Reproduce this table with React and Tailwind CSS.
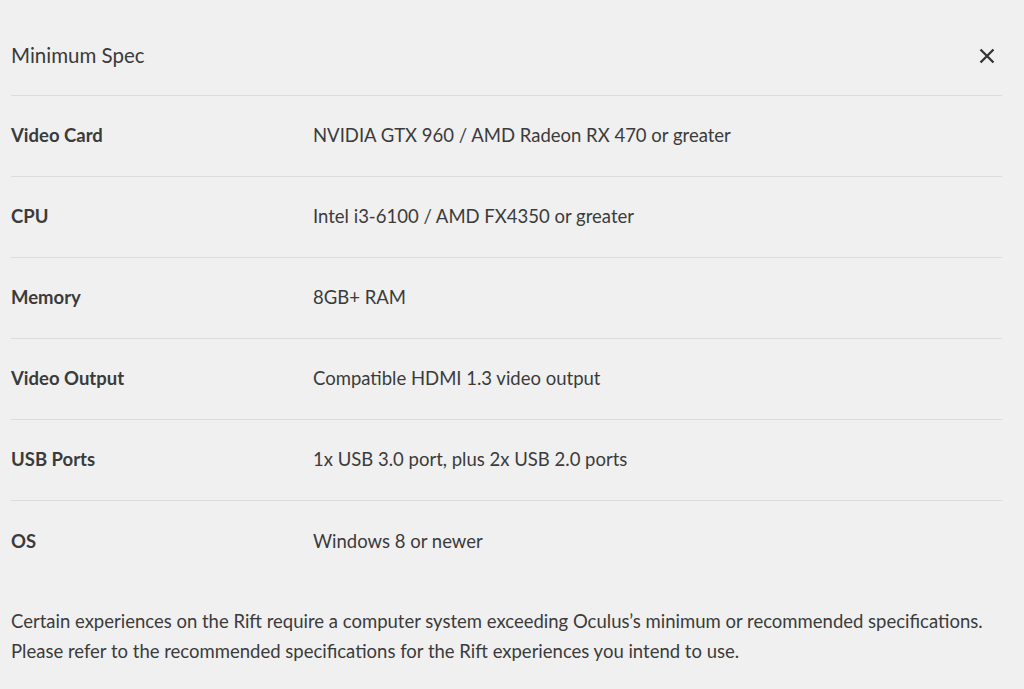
import React from "react";

const specs = [
  ["Video Card", "NVIDIA GTX 960 / AMD Radeon RX 470 or greater"],
  ["CPU", "Intel i3-6100 / AMD FX4350 or greater"],
  ["Memory", "8GB+ RAM"],
  ["Video Output", "Compatible HDMI 1.3 video output"],
  ["USB Ports", "1x USB 3.0 port, plus 2x USB 2.0 ports"],
  ["OS", "Windows 8 or newer"],
];

const App = () => {
  return (
    <div className="min-h-[689px] w-full bg-[#f0f0f0] text-[#3b3b3b] font-['Lato',sans-serif] pl-[11px] pr-[22px]">
      <div className="h-[96px] pt-[16px] flex justify-between items-center border-b border-[#dcdcdc]">
        <h1 className="text-[20.5px] font-normal">Minimum Spec</h1>
        <svg width="18" height="18" viewBox="0 0 18 18" className="mr-[6px]">
          <path d="M2.5 2.5 L15.5 15.5 M15.5 2.5 L2.5 15.5" stroke="#333" strokeWidth="2.3" />
        </svg>
      </div>
      {specs.map(([k, v], i) => (
        <div
          key={k}
          className={
            "h-[81px] flex items-center text-[18.5px] " +
            (i < specs.length - 1 ? "border-b border-[#dcdcdc]" : "")
          }
        >
          <div className="w-[302px] font-bold">{k}</div>
          <div>{v}</div>
        </div>
      ))}
      <div className="mt-[24px] text-[18.5px] leading-[30px]">
        <p>
          Certain experiences on the Rift require a computer system exceeding Oculus’s minimum or recommended specifications.
        </p>
        <p>Please refer to the recommended specifications for the Rift experiences you intend to use.</p>
      </div>
    </div>
  );
};

export default App;
